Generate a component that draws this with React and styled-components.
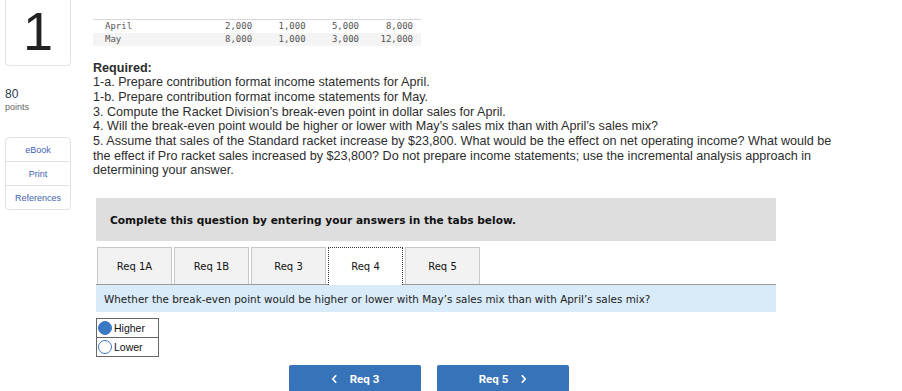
import React from 'react'
import styled, { createGlobalStyle } from 'styled-components'

const GlobalStyle = createGlobalStyle`
  body {
    margin: 0;
    background: #fff;
    font-family: "Liberation Sans", Arial, sans-serif;
  }
`

const rows = [
  { label: 'April', values: ['2,000', '1,000', '5,000', '8,000'] },
  { label: 'May', values: ['8,000', '1,000', '3,000', '12,000'] },
]

const tabs = ['Req 1A', 'Req 1B', 'Req 3', 'Req 4', 'Req 5']

function App() {
  return (
    <Page>
      <GlobalStyle />
      <Side>
        <NumberBox>1</NumberBox>
        <Points>
          <strong>80</strong>
          <span>points</span>
        </Points>
        <LinkList>
          <SideLink>eBook</SideLink>
          <SideLink>Print</SideLink>
          <SideLink>References</SideLink>
        </LinkList>
      </Side>

      <Main>
        <DataTable>
          <tbody>
            {rows.map((r, i) => (
              <tr key={r.label} className={i % 2 ? 'alt' : ''}>
                <td className="label">{r.label}</td>
                {r.values.map((v, j) => (
                  <td key={j} className="num">{v}</td>
                ))}
              </tr>
            ))}
          </tbody>
        </DataTable>

        <Required>
          <b>Required:</b>
          <br />
          1-a. Prepare contribution format income statements for April.
          <br />
          1-b. Prepare contribution format income statements for May.
          <br />
          3. Compute the Racket Division’s break-even point in dollar sales for April.
          <br />
          4. Will the break-even point would be higher or lower with May’s sales mix than with April’s sales mix?
          <br />
          5. Assume that sales of the Standard racket increase by $23,800. What would be the effect on net operating income? What would be
          <br />
          the effect if Pro racket sales increased by $23,800? Do not prepare income statements; use the incremental analysis approach in
          <br />
          determining your answer.
        </Required>

        <Question>
          <Banner>Complete this question by entering your answers in the tabs below.</Banner>
          <TabRow>
            {tabs.map((t) => (
              <Tab key={t} $active={t === 'Req 4'}>{t}</Tab>
            ))}
          </TabRow>
          <Prompt>
            Whether the break-even point would be higher or lower with May’s sales mix than with April’s sales mix?
          </Prompt>
          <Choices>
            <Choice>
              <Radio $checked />
              Higher
            </Choice>
            <Choice>
              <Radio />
              Lower
            </Choice>
          </Choices>
          <NavRow>
            <NavButton>
              <Chevron viewBox="0 0 8 12"><path d="M6 1.5 L2 6 L6 10.5" /></Chevron>
              Req 3
            </NavButton>
            <NavButton>
              Req 5
              <Chevron viewBox="0 0 8 12"><path d="M2 1.5 L6 6 L2 10.5" /></Chevron>
            </NavButton>
          </NavRow>
        </Question>
      </Main>
    </Page>
  )
}

const Page = styled.div`
  display: flex;
  width: 902px;
  height: 391px;
  overflow: hidden;
`

const Side = styled.div`
  width: 66px;
  margin-left: 5px;
  display: flex;
  flex-direction: column;
`

const NumberBox = styled.div`
  height: 66px;
  box-sizing: border-box;
  border: 1px solid #e4e4e4;
  border-top: none;
  border-radius: 0 0 4px 4px;
  text-align: center;
  font-family: "Liberation Sans", Arial, sans-serif;
  font-size: 54px;
  line-height: normal;
  color: #222;
`

const Points = styled.div`
  margin-top: 21px;
  display: flex;
  flex-direction: column;
  strong {
    font-weight: 400;
    font-size: 12px;
    color: #2b3b55;
    line-height: 14px;
  }
  span {
    font-size: 9px;
    color: #666;
    line-height: 12px;
  }
`

const LinkList = styled.div`
  margin-top: 24px;
  border: 1px solid #e2e2e2;
  border-radius: 4px;
  display: flex;
  flex-direction: column;
`

const SideLink = styled.div`
  height: 23px;
  display: flex;
  align-items: center;
  justify-content: center;
  font-size: 9px;
  color: #3f63b0;
  & + & {
    border-top: 1px solid #e2e2e2;
  }
`

const Main = styled.div`
  margin-left: 22px;
  flex: 1;
  display: flex;
  flex-direction: column;
`

const DataTable = styled.table`
  margin-top: 19px;
  width: 328px;
  border-collapse: collapse;
  border-top: 1px solid #d8d8d8;
  font-family: "DejaVu Sans Mono", monospace;
  font-size: 9px;
  color: #555;
  tr {
    height: 13px;
  }
  tr.alt {
    background: #f4f4f4;
  }
  td {
    padding: 0;
  }
  td.label {
    padding-left: 12px;
    width: 100px;
  }
  td.num {
    text-align: right;
    width: 56px;
  }
  td.num:last-child {
    padding-right: 8px;
  }
`

const Required = styled.div`
  margin-top: 15px;
  font-family: "Liberation Sans", Arial, sans-serif;
  font-size: 12.6px;
  line-height: 14.7px;
  color: #2d2d2d;
  white-space: nowrap;
  b {
    font-weight: 700;
  }
`

const Question = styled.div`
  margin-top: 20px;
  margin-left: 3px;
  width: 680px;
  display: flex;
  flex-direction: column;
  font-family: "DejaVu Sans", Verdana, sans-serif;
`

const Banner = styled.div`
  height: 43px;
  background: #dedede;
  display: flex;
  align-items: center;
  padding-left: 14px;
  font-size: 10.6px;
  font-weight: 700;
  color: #111;
`

const TabRow = styled.div`
  margin-top: 6px;
  display: flex;
  gap: 2px;
  border-bottom: 1px solid #999;
  padding-left: 1px;
`

const Tab = styled.div`
  width: 75px;
  box-sizing: border-box;
  display: flex;
  align-items: center;
  justify-content: center;
  font-size: 10px;
  color: #111;
  background: ${(p) => (p.$active ? '#fff' : '#f2f2f2')};
  border: ${(p) => (p.$active ? '1px dotted #333' : '1px solid #c8c8c8')};
  border-bottom: none;
  margin-bottom: ${(p) => (p.$active ? '-1px' : '0')};
  height: ${(p) => (p.$active ? '38px' : '37px')};
`

const Prompt = styled.div`
  height: 27px;
  background: #d9eaf8;
  display: flex;
  align-items: center;
  padding-left: 8px;
  font-size: 10.4px;
  color: #222;
`

const Choices = styled.div`
  margin-top: 6px;
  width: 61px;
  border: 1px solid #666;
  display: flex;
  flex-direction: column;
`

const Choice = styled.div`
  height: 18px;
  display: flex;
  align-items: center;
  font-family: "Liberation Sans", Arial, sans-serif;
  font-size: 10.5px;
  color: #111;
  & + & {
    border-top: 1px solid #666;
  }
`

const Radio = styled.span`
  width: 14px;
  height: 14px;
  box-sizing: border-box;
  border-radius: 50%;
  border: 1.5px solid #3b78c4;
  background: ${(p) => (p.$checked ? '#3b78c4' : '#fff')};
  margin: 0 2px 0 1px;
`

const NavRow = styled.div`
  margin-top: 8px;
  margin-left: 193px;
  display: flex;
  gap: 16px;
`

const NavButton = styled.div`
  width: 132px;
  height: 27px;
  border-radius: 2px;
  background: #3673b8;
  color: #fff;
  display: flex;
  align-items: center;
  justify-content: center;
  gap: 12px;
  font-family: "Roboto", sans-serif;
  font-weight: 700;
  font-size: 11.5px;
`

const Chevron = styled.svg`
  width: 7px;
  height: 10px;
  fill: none;
  stroke: #fff;
  stroke-width: 2;
`

export default App
